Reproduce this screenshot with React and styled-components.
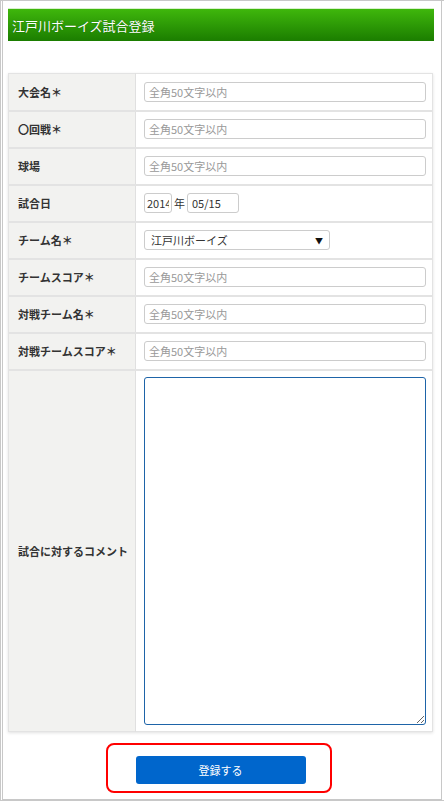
import React from "react";
import styled, { createGlobalStyle } from "styled-components";

const Global = createGlobalStyle`
  html, body { margin: 0; padding: 0; background: #fff; }
  body { font-family: "Noto Sans CJK JP", "Noto Sans", sans-serif; }
  * { box-sizing: border-box; }
`;

const Outer = styled.div`
  width: 444px;
  height: 801px;
  border: 1px solid #c8c8c8;
  border-right: none;
  padding: 0 0 0 1px;
  display: flex;
`;

const Frame = styled.div`
  flex: 1;
  height: 799px;
  border-left: 1px solid #c8c8c8;
  border-right: 1px solid #c8c8c8;
  border-bottom: 1px solid #c8c8c8;
  margin-right: 2px;
  padding: 7px 4px 0 5px;
  display: flex;
  flex-direction: column;
`;

const Header = styled.div`
  height: 33px;
  width: 426px;
  background: linear-gradient(#3fb70c, #1b7d00);
  border-top: 1px solid #d8f0cc;
  color: #fff;
  font-size: 13px;
  display: flex;
  align-items: center;
  padding-left: 4px;
  text-shadow: 0 0 1px rgba(0, 60, 0, 0.6);
`;

const Table = styled.table`
  margin-top: 32px;
  width: 425px;
  border-collapse: collapse;
  box-shadow: 0 1px 3px rgba(0, 0, 0, 0.12);
  border: 1px solid #e3e3e3;
`;

const Row = styled.tr`
  border-bottom: 2px solid #e3e3e3;
  &:last-child { border-bottom: none; }
`;

const Label = styled.th`
  width: 127px;
  background: #f2f2f0;
  border-right: 1px solid #e0e0e0;
  text-align: left;
  font-size: 11px;
  font-weight: bold;
  color: #333;
  padding: 0 0 0 9px;
  height: 37px;
`;

const Cell = styled.td`
  padding: ${(p) => (p.$tall ? "6px 6px 6px 8px" : "0 6px 0 8px")};
  height: 37px;
  vertical-align: middle;
  font-size: 11px;
  color: #333;
`;

const Input = styled.input`
  width: ${(p) => p.$w || "282px"};
  height: 20px;
  border: 1px solid #ccc;
  border-radius: 3px;
  font-family: inherit;
  font-size: 11px;
  color: #333;
  padding: ${(p) => (p.$tight ? "0 2px" : "0 4px")};
  display: block;
  &::placeholder { color: #999; }
`;

const DateWrap = styled.div`
  display: flex;
  align-items: center;
  gap: 1px;
`;

const Year = styled.span`
  font-size: 11px;
  color: #333;
  margin: 0 1px;
`;

const SelectBox = styled.div`
  width: 186px;
  height: 20px;
  border: 1px solid #ccc;
  border-radius: 3px;
  display: flex;
  align-items: center;
  justify-content: space-between;
  padding: 0 6px 0 6px;
  font-size: 11px;
  color: #333;
`;

const Arrow = styled.span`
  font-size: 8px;
  color: #111;
`;

const TextArea = styled.textarea`
  width: 282px;
  height: 348px;
  border: 1px solid #1e64a8;
  border-radius: 3px;
  display: block;
  resize: vertical;
  outline: none;
`;

const Footer = styled.div`
  display: flex;
  justify-content: center;
  padding-top: 11px;
`;

const Highlight = styled.div`
  width: 226px;
  height: 50px;
  border: 2px solid #ff0000;
  border-radius: 8px;
  display: flex;
  align-items: center;
  justify-content: flex-start;
  padding: 4px 0 0 28px;
  margin-right: 8px;
`;

const Button = styled.button`
  width: 170px;
  height: 28px;
  background: #0066cc;
  border: none;
  border-radius: 3px;
  color: #fff;
  font-family: inherit;
  font-size: 11px;
`;

const PH = "全角50文字以内";

export default function App() {
  const textRows = ["大会名＊", "〇回戦＊", "球場"];
  const lowerRows = ["チームスコア＊", "対戦チーム名＊", "対戦チームスコア＊"];
  return (
    <>
      <Global />
      <Outer>
        <Frame>
          <Header>江戸川ボーイズ試合登録</Header>
          <Table>
            <tbody>
              {textRows.map((l) => (
                <Row key={l}>
                  <Label>{l}</Label>
                  <Cell>
                    <Input placeholder={PH} />
                  </Cell>
                </Row>
              ))}
              <Row>
                <Label>試合日</Label>
                <Cell>
                  <DateWrap>
                    <Input $w="28px" $tight defaultValue="2014" />
                    <Year>年</Year>
                    <Input $w="52px" defaultValue="05/15" />
                  </DateWrap>
                </Cell>
              </Row>
              <Row>
                <Label>チーム名＊</Label>
                <Cell>
                  <SelectBox>
                    <span>江戸川ボーイズ</span>
                    <Arrow>▼</Arrow>
                  </SelectBox>
                </Cell>
              </Row>
              {lowerRows.map((l) => (
                <Row key={l}>
                  <Label>{l}</Label>
                  <Cell>
                    <Input placeholder={PH} />
                  </Cell>
                </Row>
              ))}
              <Row>
                <Label>試合に対するコメント</Label>
                <Cell $tall>
                  <TextArea />
                </Cell>
              </Row>
            </tbody>
          </Table>
          <Footer>
            <Highlight>
              <Button>登録する</Button>
            </Highlight>
          </Footer>
        </Frame>
      </Outer>
    </>
  );
}
